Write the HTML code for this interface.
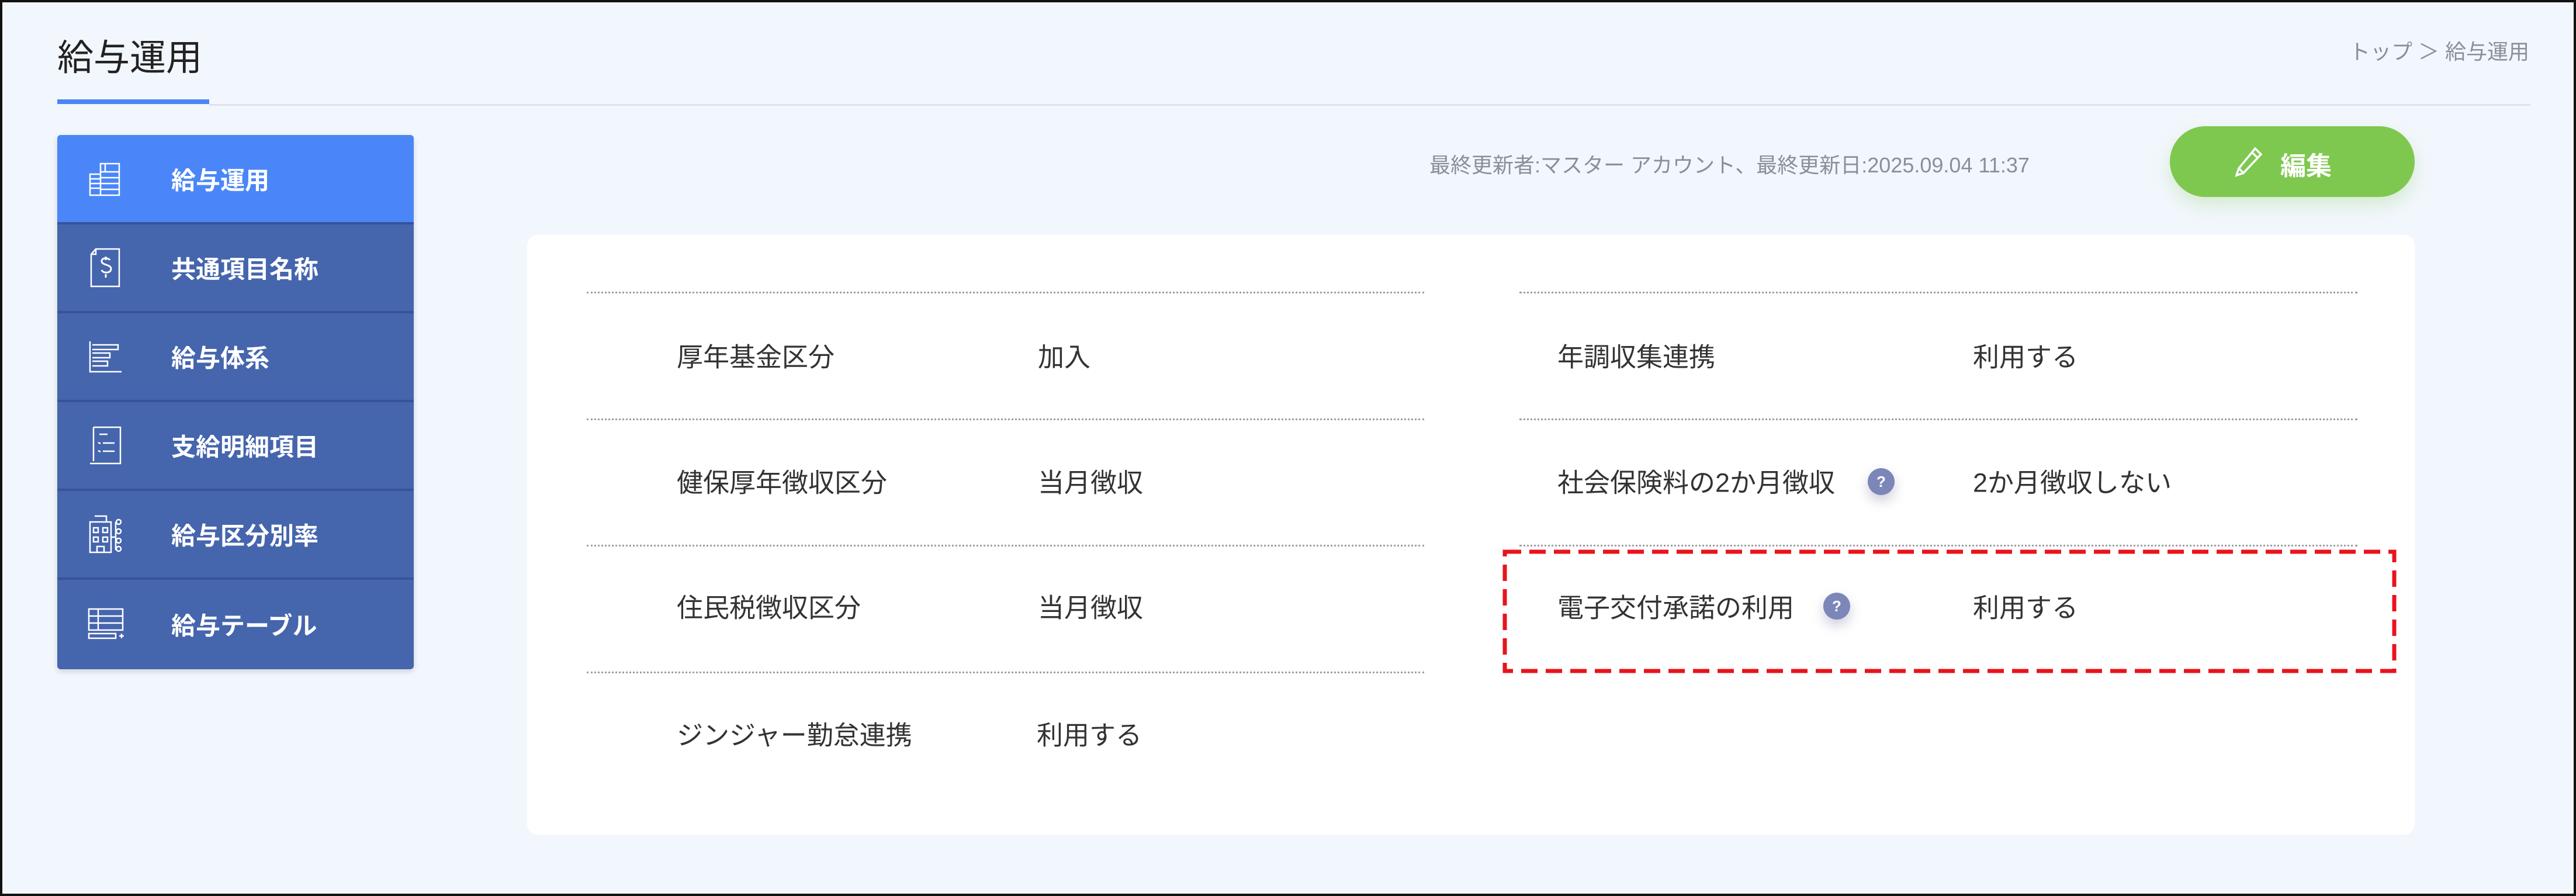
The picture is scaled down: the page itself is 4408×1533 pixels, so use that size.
<!DOCTYPE html>
<html><head><meta charset="utf-8"><style>
*{margin:0;padding:0;box-sizing:border-box}
body{width:4408px;height:1533px;background:#f2f7fd;font-family:"Liberation Sans","Noto Sans CJK JP",sans-serif;color:#333;position:relative;overflow:hidden}
.frame{position:absolute;left:0;top:0;width:4408px;height:1533px;border:4px solid #111}
.abs{position:absolute;white-space:nowrap}
.title{left:98px;top:48px;font-size:62px;color:#222}
.ul{left:98px;top:170px;width:260px;height:8px;background:#4a86f7}
.gl{left:358px;top:178px;width:3972px;height:3px;background:#dde3ec}
.bc{right:80px;top:60px;font-size:36px;color:#8a8f98}
.side{left:98px;top:231px;width:610px;height:914px;border-radius:6px;overflow:hidden;background:#4565ad;box-shadow:0 4px 10px rgba(0,0,0,.15)}
.row{position:absolute;left:0;width:610px;height:152px;border-bottom:4px solid #37539a}
.row span{position:absolute;left:195px;top:50%;transform:translateY(-50%);font-size:42px;font-weight:bold;color:#fff}
.row svg{position:absolute;left:52px;top:50%;transform:translateY(-50%)}
.meta{left:2446px;top:254px;font-size:36px;color:#8a8f98}
.btn{left:3713px;top:216px;width:419px;height:121px;border-radius:61px;background:#7ec84f;box-shadow:0 14px 30px rgba(126,200,79,.25)}
.btn span{position:absolute;left:189px;top:32px;font-size:44px;font-weight:bold;color:#fff}
.card{left:902px;top:402px;width:3230px;height:1026px;background:#fff;border-radius:18px}
.dot{height:0;border-top:3px dotted #9aa0a8}
.t{font-size:45px;color:#333;transform:translateY(-50%)}
.q{width:46px;height:46px;border-radius:50%;background:#7d86b8;color:#fff;font-size:26px;font-weight:bold;text-align:center;line-height:46px;box-shadow:0 10px 20px rgba(60,60,110,.25)}
</style></head><body>
<div class="frame"></div>
<div class="abs title">給与運用</div>
<div class="abs ul"></div>
<div class="abs gl"></div>
<div class="abs bc">トップ ＞ 給与運用</div>

<div class="abs side">
 <div class="row" style="top:0;background:#4a86f7;height:153px">
  <svg width="60" height="64" viewBox="0 0 60 64" fill="none" stroke="#fff" stroke-width="2.5"><path d="M4 60V24h18V6h32v54z M22 24v36 M4 32h18 M4 40h18 M4 48h18 M22 20h32 M22 30h32 M22 40h32 M22 50h32 M30 6v14"/></svg>
  <span>給与運用</span></div>
 <div class="row" style="top:153px">
  <svg width="60" height="70" viewBox="0 0 60 70" fill="none" stroke="#fff" stroke-width="2.5"><path d="M14 3h40v64H6V12z M14 3v9H6"/><path d="M38 22c-2-4-14-5-14 2s16 5 16 13-14 8-16 2 M31 16v6 M31 46v6" stroke-width="3"/></svg>
  <span>共通項目名称</span></div>
 <div class="row" style="top:305px">
  <svg width="60" height="60" viewBox="0 0 60 60" fill="none" stroke="#fff" stroke-width="2.5"><path d="M4 4v52h54 M8 10h44v8H8 M8 24h30v8H8 M8 38h26v8H8"/></svg>
  <span>給与体系</span></div>
 <div class="row" style="top:457px">
  <svg width="60" height="70" viewBox="0 0 60 70" fill="none" stroke="#fff" stroke-width="2.5"><path d="M10 4h46v62H4 M10 4v58 M20 16h14 M18 30l4 2 M26 31h20 M18 44l4 2 M26 45h20"/></svg>
  <span>支給明細項目</span></div>
 <div class="row" style="top:609px">
  <svg width="60" height="70" viewBox="0 0 60 70" fill="none" stroke="#fff" stroke-width="2.5"><path d="M4 14h36v52H4z M12 4h20v10 M10 24h8v8h-8z M26 24h8v8h-8z M10 40h8v8h-8z M26 40h8v8h-8z M16 66V56h12v10 M40 40h8 M48 14v48"/><circle cx="53" cy="14" r="4"/><circle cx="53" cy="30" r="4"/><circle cx="53" cy="46" r="4"/><circle cx="53" cy="60" r="4"/></svg>
  <span>給与区分別率</span></div>
 <div class="row" style="top:761px;border-bottom:none">
  <svg width="64" height="56" viewBox="0 0 64 56" fill="none" stroke="#fff" stroke-width="2.5"><path d="M2 2h58v36H2z M2 14h58 M2 26h58 M18 2v36 M2 44h46v8H2z M54 48h8 M58 44v8"/></svg>
  <span>給与テーブル</span></div>
</div>

<div class="abs meta">最終更新者:マスター アカウント、最終更新日:2025.09.04 11:37</div>
<div class="abs btn">
 <svg style="position:absolute;left:110px;top:34px" width="52" height="54" viewBox="0 0 52 54" fill="none" stroke="#fff" stroke-width="3.5"><path d="M36 4l10 10L16 46 4 50l4-12z M30 10l10 10 M8 38l8 8"/></svg>
 <span>編集</span></div>

<div class="abs card"></div>
<div class="abs dot" style="left:1004px;top:499px;width:1433px"></div>
<div class="abs dot" style="left:1004px;top:716px;width:1433px"></div>
<div class="abs dot" style="left:1004px;top:932px;width:1433px"></div>
<div class="abs dot" style="left:1004px;top:1149px;width:1433px"></div>
<div class="abs dot" style="left:2600px;top:499px;width:1434px"></div>
<div class="abs dot" style="left:2600px;top:716px;width:1434px"></div>
<div class="abs dot" style="left:2600px;top:932px;width:1434px"></div>

<div class="abs t" style="left:1158px;top:607px">厚年基金区分</div>
<div class="abs t" style="left:1776px;top:607px">加入</div>
<div class="abs t" style="left:1158px;top:822px">健保厚年徴収区分</div>
<div class="abs t" style="left:1776px;top:822px">当月徴収</div>
<div class="abs t" style="left:1158px;top:1036px">住民税徴収区分</div>
<div class="abs t" style="left:1776px;top:1036px">当月徴収</div>
<div class="abs t" style="left:1158px;top:1254px">ジンジャー勤怠連携</div>
<div class="abs t" style="left:1774px;top:1254px">利用する</div>

<div class="abs t" style="left:2665px;top:607px">年調収集連携</div>
<div class="abs t" style="left:3376px;top:607px">利用する</div>
<div class="abs t" style="left:2665px;top:822px">社会保険料の2か月徴収</div>
<div class="abs q" style="left:3196px;top:801px">?</div>
<div class="abs t" style="left:3376px;top:822px">2か月徴収しない</div>
<div class="abs t" style="left:2665px;top:1036px">電子交付承諾の利用</div>
<div class="abs q" style="left:3120px;top:1014px">?</div>
<div class="abs t" style="left:3376px;top:1036px">利用する</div>

<svg class="abs" style="left:2571px;top:940px" width="1530" height="212"><rect x="4" y="4" width="1522" height="204" fill="none" stroke="#e8141c" stroke-width="7" stroke-dasharray="28 14"/></svg>
</body></html>
